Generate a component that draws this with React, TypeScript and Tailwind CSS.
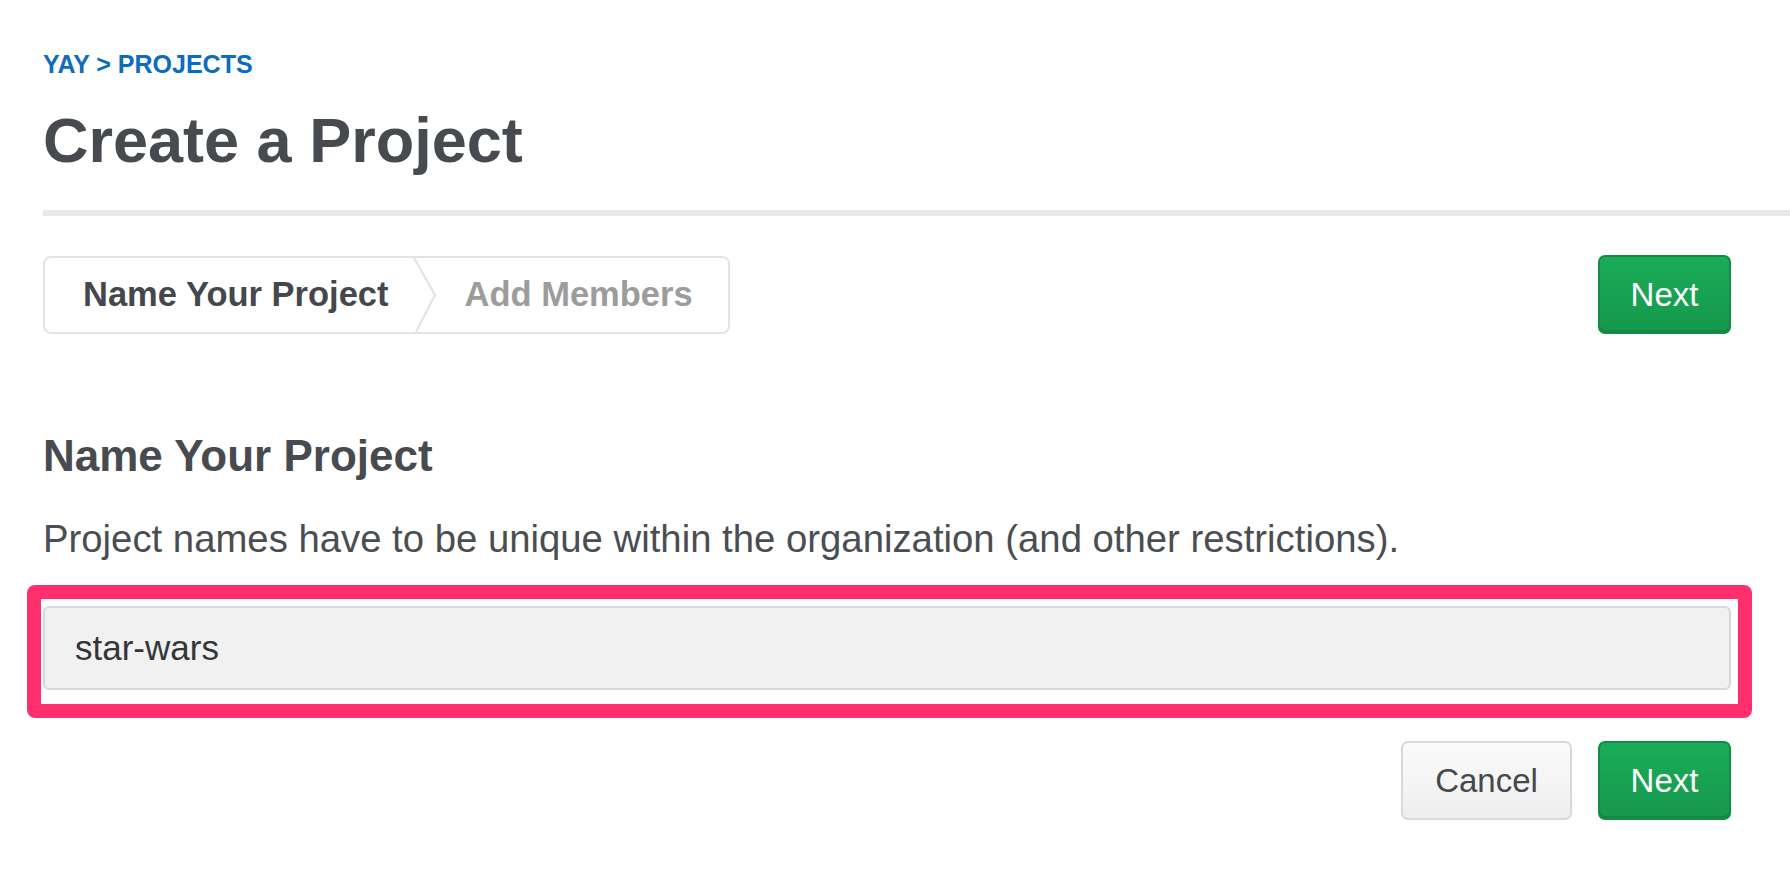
import { useState } from "react";

function Stepper() {
  return (
    <div className="flex h-[78px] w-[687px] items-stretch rounded-[8px] border-2 border-[#e4e4e4] bg-white">
      <div className="flex items-center pl-[38px] pr-[24px] text-[34.5px] font-bold text-[#44484c]">
        Name Your Project
      </div>
      <svg width="24" height="74" viewBox="0 0 24 74" className="shrink-0" fill="none">
        <polyline points="1,0 22,37 3,74" stroke="#e2e2e2" strokeWidth="2" />
      </svg>
      <div className="flex items-center pl-[28px] text-[34.5px] font-bold text-[#9c9c9c]">
        Add Members
      </div>
    </div>
  );
}

function GreenButton({ label }: { label: string }) {
  return (
    <button className="h-[79px] w-[133px] rounded-[7px] border-2 border-[#138c45] bg-gradient-to-b from-[#1aac59] to-[#16984c] text-[33px] text-white shadow-[inset_0_-2px_0_#15873f]">
      {label}
    </button>
  );
}

export default function App() {
  const [name, setName] = useState("star-wars");

  return (
    <div className="min-h-screen bg-white pl-[43px] pr-[59px] font-['Liberation_Sans',Arial,sans-serif]">
      <div className="pt-[52px] text-[25px] font-bold leading-none text-[#0c6cbd]">
        YAY &gt; PROJECTS
      </div>
      <h1 className="mt-[32px] text-[63px] font-bold leading-none text-[#474b50]">
        Create a Project
      </h1>
      <div className="-mr-[59px] mt-[38px] h-[6px] bg-[#e8e8e8]" />

      <div className="mt-[39px] flex items-center justify-between">
        <Stepper />
        <GreenButton label="Next" />
      </div>

      <h2 className="mt-[100px] text-[44px] font-bold leading-none text-[#474b50]">
        Name Your Project
      </h2>
      <p className="mt-[42px] text-[38.3px] leading-none text-[#4a4e52]">
        Project names have to be unique within the organization (and other restrictions).
      </p>

      <div className="relative mt-[48px]">
        <input
          value={name}
          onChange={(e) => setName(e.target.value)}
          className="h-[84px] w-full rounded-[6px] border-2 border-[#d8d8d8] bg-[#f1f1f1] pl-[30px] text-[35px] text-[#333639] outline-none"
        />
        <div className="pointer-events-none absolute -bottom-[28px] -left-[16px] -right-[21px] -top-[21px] rounded-[8px] border-[14px] border-[#ff2f6e]" />
      </div>

      <div className="mt-[51px] flex justify-end gap-[26px]">
        <button className="h-[79px] w-[171px] rounded-[7px] border-2 border-[#d6d8d9] bg-gradient-to-b from-[#fbfbfb] to-[#eeeeee] text-[33px] text-[#45484c]">
          Cancel
        </button>
        <GreenButton label="Next" />
      </div>
    </div>
  );
}
